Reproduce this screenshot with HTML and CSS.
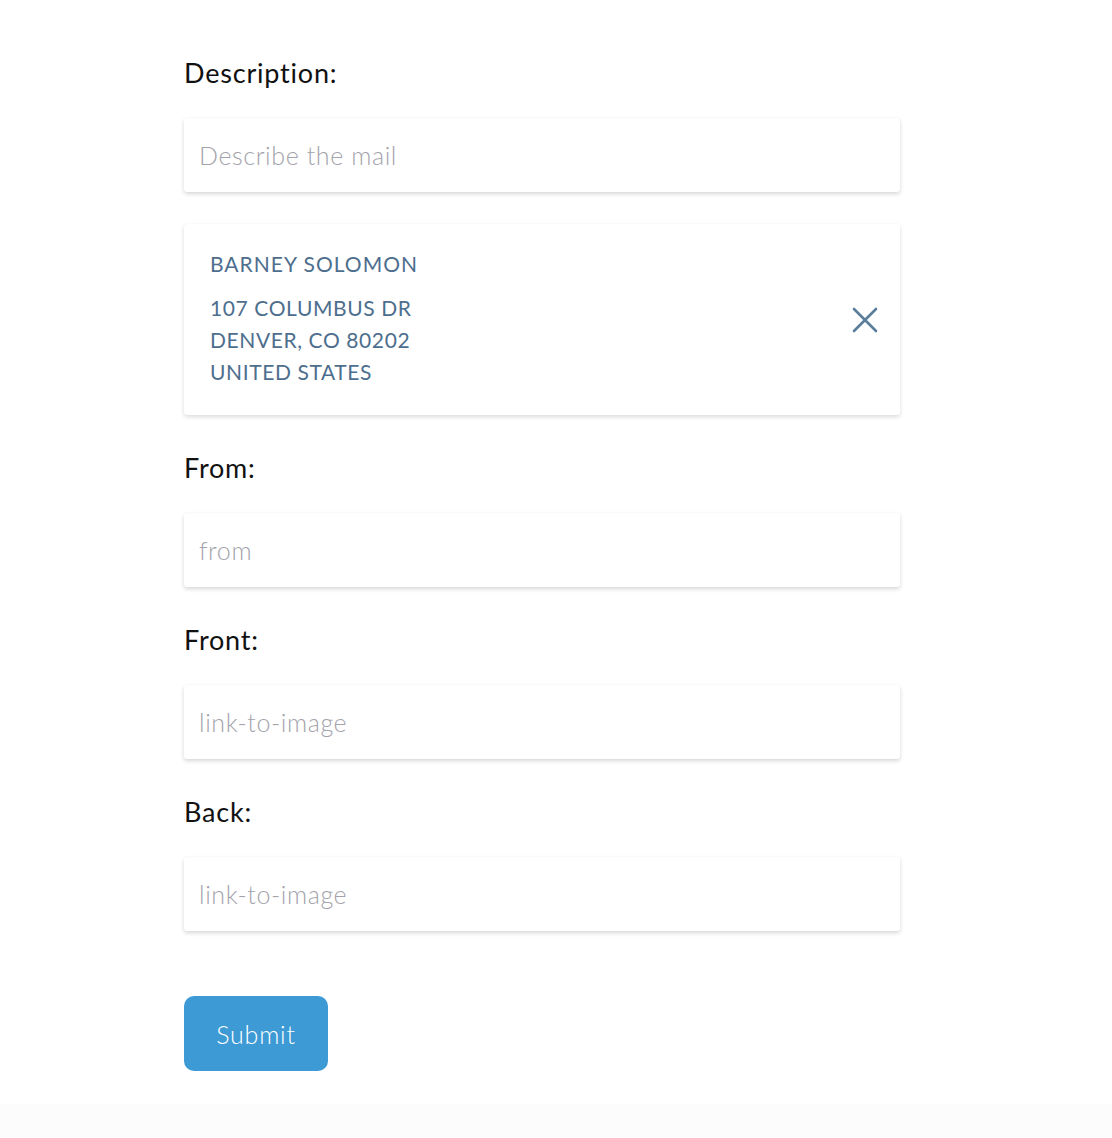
FILE: index.html
```html
<!DOCTYPE html>
<html>
<head>
<meta charset="utf-8">
<link rel="stylesheet" href="styles.css">
</head>
<body>
<main class="page">
  <form class="form">
    <label class="label">Description:</label>
    <input class="field" type="text" placeholder="Describe the mail">

    <div class="address-card">
      <div class="address-text">
        <div class="address-name">BARNEY SOLOMON</div>
        <div class="address-lines">
          <div>107 COLUMBUS DR</div>
          <div>DENVER, CO 80202</div>
          <div>UNITED STATES</div>
        </div>
      </div>
      <svg class="close-icon" width="26" height="26" viewBox="0 0 26 26" aria-hidden="true">
        <path d="M2 2 L24 24 M24 2 L2 24" stroke="#5a7d9c" stroke-width="2.6" stroke-linecap="round" fill="none"/>
      </svg>
    </div>

    <label class="label label-after-card">From:</label>
    <input class="field" type="text" placeholder="from">

    <label class="label label-after-field">Front:</label>
    <input class="field" type="text" placeholder="link-to-image">

    <label class="label label-after-field">Back:</label>
    <input class="field" type="text" placeholder="link-to-image">

    <button class="submit" type="button">Submit</button>
  </form>
</main>
</body>
</html>
```

FILE: styles.css
```css
html, body {
  margin: 0;
  padding: 0;
}
body {
  background: #fcfcfc;
  font-family: "Lato", "Noto Sans", sans-serif;
}
.page {
  background: #ffffff;
  padding: 57px 0 33px 184px;
}
.form {
  width: 716px;
  display: flex;
  flex-direction: column;
  align-items: flex-start;
}
.label {
  font-size: 27px;
  line-height: 32px;
  letter-spacing: 0.8px;
  color: #111;
  margin-bottom: 29px;
}
.label-after-card {
  margin-top: 37px;
}
.label-after-field {
  margin-top: 37px;
}
.field {
  box-sizing: border-box;
  width: 716px;
  height: 74px;
  border: none;
  border-radius: 3px;
  background: #fff;
  box-shadow: 0 2px 4px rgba(0,0,0,0.16), 0 0 1px rgba(0,0,0,0.04);
  padding: 0 15px;
  font-family: inherit;
  font-size: 25px;
  letter-spacing: 0.6px;
  color: #333;
  outline: none;
}
.field::placeholder {
  color: #a3a3ab;
  font-weight: 300;
}
.address-card {
  box-sizing: border-box;
  width: 716px;
  height: 191px;
  margin-top: 32px;
  background: #fff;
  border-radius: 3px;
  box-shadow: 0 2px 4px rgba(0,0,0,0.14), 0 0 1px rgba(0,0,0,0.05);
  padding: 26px 22px 0 26px;
  display: flex;
  justify-content: space-between;
  align-items: center;
  color: #4d6e8d;
}
.address-text {
  align-self: flex-start;
}
.address-name {
  font-size: 21px;
  line-height: 28px;
  letter-spacing: 1px;
}
.address-lines {
  margin-top: 14px;
  font-size: 21px;
  line-height: 32px;
  letter-spacing: 0.6px;
}
.close-icon {
  margin-top: -26px;
}
.submit {
  margin-top: 65px;
  width: 144px;
  height: 75px;
  border: none;
  border-radius: 10px;
  background: #3d9ad4;
  color: #fff;
  font-family: inherit;
  font-size: 25px;
  letter-spacing: 0.8px;
  font-weight: 300;
}
```
